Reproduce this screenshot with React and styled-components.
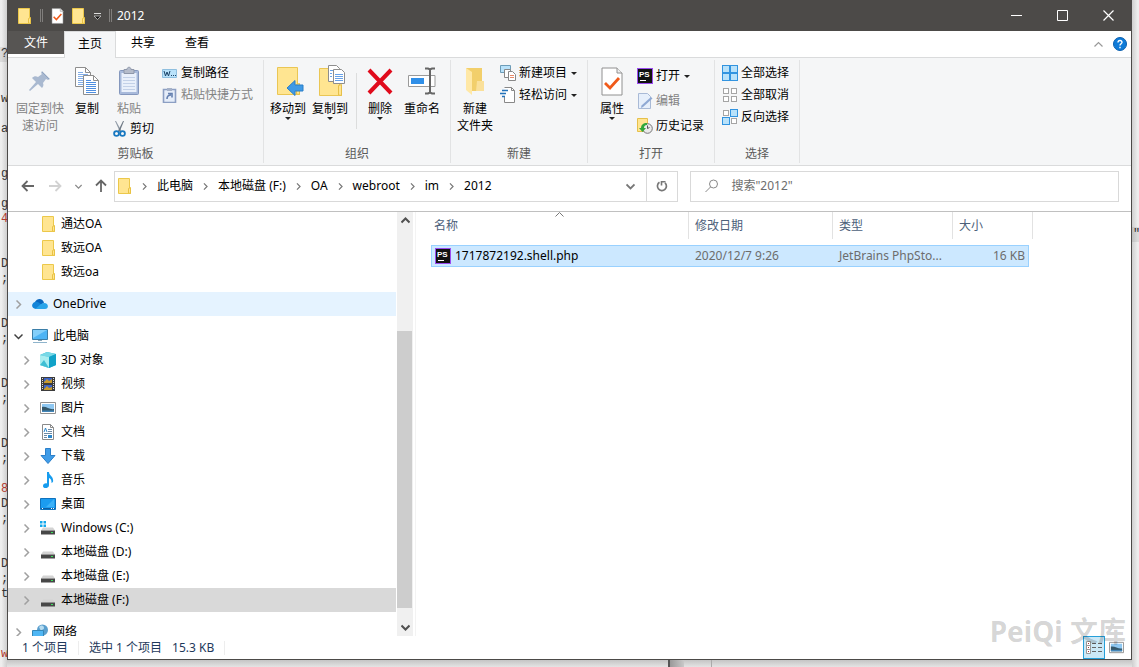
import React from 'react';
import styled, { createGlobalStyle, css } from 'styled-components';

const uiFont = `'Noto Sans', 'Noto Sans CJK SC', sans-serif`;
const lineGrey = '#dadbdc';

const GlobalStyle = createGlobalStyle`
  * {
    box-sizing: border-box;
  }
  body {
    margin: 0;
    overflow: hidden;
    font: 12px/16px ${uiFont};
    color: #000;
  }
  button,
  input {
    margin: 0;
    padding: 0;
    border: 0;
    background: none;
    color: inherit;
    font: inherit;
  }
  svg {
    display: block;
    flex: none;
  }
`;

/* ---------- desktop and window frame ---------- */

const Desktop = styled.div`
  display: grid;
  grid-template-columns: 7px minmax(0, 1fr) 7px;
  grid-template-rows: minmax(0, 1fr) 7px;
  height: 100vh;
  background: #e6e6e6;
`;

const EditorEdge = styled.div`
  grid-row: 1 / 3;
  grid-column: ${(props) => (props.$right ? 3 : 1)};
  padding-top: 2px;
  overflow: hidden;
  background: linear-gradient(
    to ${(props) => (props.$right ? 'left' : 'right')},
    #eee 20%,
    #cfcfcf
  );
  font: 12px/15px 'Liberation Mono', monospace;
`;

const EditorLine = styled.div`
  height: 15px;
  padding-left: 1px;
  color: ${(props) => (props.$red ? '#b03a2e' : '#333')};
  ${(props) =>
    props.$current &&
    css`
      background: rgba(0, 0, 0, 0.08);
    `}
`;

const BottomEdge = styled.div`
  display: flex;
  grid-row: 2;
  grid-column: 2;
  background: linear-gradient(#c4c4c4, #e4e4e4);
`;

const EdgeSpace = styled.div`
  flex: 661 1 0;
`;

const EdgeShadow = styled.div`
  width: 16px;
  border-left: 2px solid #555;
  background: linear-gradient(to right, #999, #c8c8c8);
`;

const EdgeRest = styled.div`
  width: 28px;
  border-right: 1px solid #aaa;
`;

const EdgeEnd = styled.div`
  flex: 420 1 0;
`;

const Window = styled.main`
  position: relative;
  display: flex;
  flex-direction: column;
  grid-row: 1;
  grid-column: 2;
  border: 1px solid #4c4a48;
  border-top: 0;
  background: #fff;
`;

const TitleBar = styled.header`
  display: flex;
  align-items: center;
  height: 31px;
  margin: 0 -1px;
  padding: 0 1px 0 11px;
  background: #4c4a48;
  color: #fff;
`;

const QuickAccess = styled.div`
  display: flex;
  align-items: center;
  gap: 8px;
  margin-right: 5px;
`;

const QuickButton = styled.button`
  display: flex;
`;

const TitleSeparator = styled.span`
  width: 3px;
  height: 13px;
  border: solid #807e7c;
  border-width: 0 1px;
`;

const Title = styled.h1`
  flex: 1;
  margin: 0;
  font-size: 12px;
  font-weight: 400;
`;

const CaptionButton = styled.button`
  display: grid;
  place-items: center;
  width: 46px;
  height: 31px;
`;

/* ---------- ribbon ---------- */

const Tabs = styled.nav`
  display: flex;
  height: 27px;
  border-bottom: 1px solid ${lineGrey};
`;

const Tab = styled.button`
  height: 26px;
  padding: 0 15px 2px;
  ${(props) =>
    props.$file &&
    css`
      height: 23px;
      padding: 0 16px;
      background: #575553;
      color: #fff;
    `}
  ${(props) =>
    props.$active &&
    css`
      height: 27px;
      padding: 0 13px 2px;
      border: 1px solid ${lineGrey};
      border-bottom: 0;
      background: #f5f6f7;
    `}
`;

const TabTools = styled.div`
  display: flex;
  align-items: center;
  gap: 10px;
  margin-left: auto;
  padding-right: 4px;
`;

const Ribbon = styled.section`
  display: flex;
  height: 108px;
  border-bottom: 1px solid ${lineGrey};
  background: #f5f6f7;
`;

const Group = styled.div`
  display: flex;
  flex-direction: column;
  width: ${(props) => props.$width}px;
  margin: 2px 0;
  border-right: 1px solid #e2e3e4;
`;

const GroupBody = styled.div`
  display: flex;
  flex: 1;
  padding-left: 3px;
`;

const GroupLabel = styled.div`
  height: 17px;
  color: #5a5a5a;
  text-align: center;
`;

const BigButton = styled.button`
  display: flex;
  flex-direction: column;
  align-items: center;
  align-self: flex-start;
  width: ${(props) => props.$width || 42}px;
  padding-top: 5px;
  line-height: 17px;
  white-space: pre-line;
  &:disabled {
    color: #838383;
  }
`;

const BigIcon = styled.span`
  display: grid;
  place-items: center;
  height: 32px;
  margin-bottom: 3px;
`;

const ButtonColumn = styled.div`
  display: flex;
  flex-direction: column;
  padding-top: ${(props) => (props.$loose ? 5 : 2)}px;
  padding-left: 4px;
  gap: ${(props) => (props.$loose ? 3 : 0)}px;
`;

const PasteColumn = styled.div`
  display: flex;
  flex-direction: column;
  gap: 1px;
  padding: 0 4px 0 3px;
  button + button {
    padding-left: 5px;
  }
`;

const SmallButton = styled.button`
  display: flex;
  align-items: center;
  gap: 3px;
  height: 22px;
  white-space: nowrap;
  &:disabled {
    color: #838383;
  }
`;

const MenuMark = styled.i`
  width: 0;
  border: solid transparent;
  border-width: 3px 3px 0;
  border-top-color: #222;
  ${(props) =>
    props.$side &&
    css`
      margin-left: 1px;
    `}
`;

const RibbonDivider = styled.i`
  width: 1px;
  height: 56px;
  margin: 13px 2px 0 5px;
  background: #dcdddd;
`;

/* ---------- address bar ---------- */

const AddressRow = styled.div`
  display: flex;
  align-items: center;
  height: 46px;
  padding: 0 12px 5px;
  border-bottom: 1px solid #c0c0c0;
`;

const NavButtons = styled.div`
  display: flex;
  align-items: center;
  width: 94px;
  gap: 11px;
`;

const NavButton = styled.button`
  display: grid;
  place-items: center;
  width: ${(props) => (props.$narrow ? 8 : 16)}px;
  height: 24px;
`;

const AddressBox = styled.div`
  display: flex;
  align-items: center;
  flex: 1;
  min-width: 0;
  height: 31px;
  margin-right: 12px;
  border: 1px solid #d9d9d9;
  padding-left: 3px;
`;

const Crumbs = styled.nav`
  display: flex;
  align-items: center;
  flex: 1;
  overflow: hidden;
  white-space: nowrap;
`;

const Crumb = styled.a`
  color: #000;
  text-decoration: none;
`;

const CrumbArrow = styled.span`
  display: grid;
  place-items: center;
  width: 25px;
  flex: none;
`;

const BoxButton = styled.button`
  display: grid;
  place-items: center;
  width: 31px;
  height: 29px;
  ${(props) =>
    props.$ruled &&
    css`
      border-left: 1px solid #d9d9d9;
    `}
`;

const SearchBox = styled.label`
  display: flex;
  align-items: center;
  width: 39%;
  gap: 12px;
  height: 31px;
  padding: 0 14px;
  border: 1px solid #d9d9d9;
`;

const SearchInput = styled.input`
  flex: 1;
  min-width: 0;
  outline: 0;
  &::placeholder {
    color: #6d6d6d;
    opacity: 1;
  }
`;

/* ---------- navigation tree ---------- */

const Content = styled.div`
  display: flex;
  flex: 1;
  min-height: 0;
`;

const Tree = styled.nav`
  width: 388px;
  margin-right: 1px;
  overflow: hidden;
`;

const TreeSection = styled.div`
  margin-bottom: 8px;
`;

const TreeRow = styled.a`
  display: flex;
  align-items: center;
  height: 24px;
  padding-left: ${(props) => (props.$nested ? 14 : 6)}px;
  gap: 5px;
  background: ${(props) => props.$fill || 'transparent'};
  color: #000;
  text-decoration: none;
`;

const TreeToggle = styled.span`
  display: grid;
  place-items: center;
  width: 9px;
  margin-right: 4px;
`;

const ScrollBar = styled.div`
  display: flex;
  flex-direction: column;
  width: 16px;
  background: #f0f0f0;
`;

const ScrollButton = styled.button`
  display: grid;
  place-items: center;
  height: 17px;
`;

const ScrollTrack = styled.div`
  display: flex;
  flex: 1;
  flex-direction: column;
  justify-content: flex-end;
  padding: 0 1px 11px 0;
`;

const ScrollThumb = styled.div`
  height: 73%;
  background: #cdcdcd;
`;

/* ---------- file list ---------- */

const FilePane = styled.section`
  flex: 1;
  min-width: 0;
  margin-left: 2px;
  padding-left: 15px;
  border-left: 1px solid #f3f3f3;
  overflow: hidden;
`;

const FileTable = styled.table`
  display: block;
`;

const TableHead = styled.thead`
  display: block;
  margin-bottom: 6px;
`;

const TableBody = styled.tbody`
  display: block;
`;

const HeadRow = styled.tr`
  display: grid;
  grid-template-columns: 258px 144px 120px 80px;
  height: 27px;
`;

const HeadCell = styled.th`
  position: relative;
  padding: 6px 0 0 ${(props) => (props.$first ? 3 : 6)}px;
  border-right: 1px solid #e2e2e2;
  color: #4c607a;
  font-weight: 400;
  text-align: left;
`;

const SortMark = styled.span`
  position: absolute;
  top: -2px;
  left: 50%;
  margin-left: -5px;
`;

const FileRow = styled.tr`
  display: grid;
  grid-template-columns: 257px 144px 120px 75px;
  width: 598px;
  height: 22px;
  border: 1px solid #99d1ff;
  background: #cce8ff;
`;

const FileCell = styled.td`
  padding: 2px 3px 0 6px;
  color: #6d6d6d;
  white-space: nowrap;
  overflow: hidden;
  text-overflow: ellipsis;
  ${(props) =>
    props.$size &&
    css`
      text-align: right;
    `}
`;

const NameCell = styled.td`
  display: flex;
  align-items: center;
  gap: 4px;
  padding: 0 3px;
`;

/* ---------- status bar ---------- */

const StatusBar = styled.footer`
  display: flex;
  align-items: center;
  height: 23px;
  padding-left: 14px;
  color: #1e395b;
`;

const StatusItem = styled.span`
  margin-right: 10px;
`;

const StatusRule = styled.i`
  width: 1px;
  height: 14px;
  margin-right: 10px;
  background: #ededed;
`;

const ViewButtons = styled.div`
  display: flex;
  height: 23px;
  margin-left: auto;
  padding-right: 4px;
`;

const ViewButton = styled.button`
  display: grid;
  place-items: center;
  width: 22px;
  height: 23px;
  ${(props) =>
    props.$active &&
    css`
      border: 1px solid #26a0da;
      background: #cbe8f6;
    `}
`;

const Watermark = styled.div`
  position: absolute;
  right: 5px;
  bottom: 11px;
  color: rgba(0, 0, 0, 0.18);
  font: 700 28px/34px ${uiFont};
  white-space: nowrap;
  pointer-events: none;
`;

/* ---------- icons ---------- */

const Svg = ({ w = 16, h = 16, children }) => (
  <svg width={w} height={h} viewBox={`0 0 ${w} ${h}`} fill="none" aria-hidden="true">
    {children}
  </svg>
);

const Chevron = ({ dir = 'right', color = '#8a8a8a', size = 9, weight = 1.5 }) => {
  const paths = {
    right: 'M2.5 0.5 6.5 4.5 2.5 8.5',
    down: 'M0.5 2.5 4.5 6.5 8.5 2.5',
    up: 'M0.5 6.5 4.5 2.5 8.5 6.5',
  };
  return (
    <svg width={size} height={size} viewBox="0 0 9 9" fill="none" aria-hidden="true">
      <path d={paths[dir]} stroke={color} strokeWidth={weight} />
    </svg>
  );
};

const FolderIcon = ({ w = 14 }) => (
  <Svg w={w}>
    <g transform={`translate(${w - 14} 0)`}>
      <path d="M.5.5h11v10h1v5H.5z" fill="#ffe591" stroke="#ecc84a" />
      <path d="M10.5 15v-4.5l2-1v6z" fill="#ffe591" stroke="#e9c243" />
    </g>
  </Svg>
);

const CheckSheetIcon = ({ w = 13, h = 16 }) => (
  <svg width={w} height={h} viewBox="0 0 22 29" fill="none" aria-hidden="true">
    <path d="M1 1h15l5 5v22H1z" fill="#fff" stroke="#909090" />
    <path d="M16 1v5h5" stroke="#909090" fill="#eee" />
    <path d="m4 16 5 5 9-10" stroke="#f05a1a" strokeWidth="2.8" />
  </svg>
);

const QuickMenuIcon = () => (
  <Svg w={7} h={8}>
    <path d="M0 1.5h7" stroke="#ddd" />
    <path d="M0 4h7L3.5 7.500z" fill="#111" stroke="#ddd" strokeWidth=".7" />
  </Svg>
);

const PinIcon = () => (
  <Svg w={24} h={24}>
    <path
      d="M14 2l8 8-2 1-2-1-3 4c1 2 0 4-1 5l-4-4-8 7-1-1 7-8-4-4c2-2 4-2 6-1l4-3-1-1z"
      fill="#a9b9d0"
    />
    <path d="M14 3l7 7" stroke="#8fa3c0" />
  </Svg>
);

const Sheet = ({ x, y, line = '#4f8fe0' }) => (
  <g transform={`translate(${x} ${y})`}>
    <path d="M.5.5h10l5 5v14H.5z" fill="#fff" stroke="#8e8e8e" />
    <path d="M10.5.5v5h5" stroke="#8e8e8e" />
    <path
      d="M3 5.500h5M3 7.500h10M3 9.500h10M3 11.500h10M3 13.500h10M3 15.500h10M3 17.500h10"
      stroke={line}
    />
  </g>
);

const CopyIcon = () => (
  <Svg w={26} h={30}>
    <Sheet x={1} y={1} line="#82aee8" />
    <Sheet x={9} y={9} />
  </Svg>
);

const PasteIcon = () => (
  <Svg w={22} h={30}>
    <rect x="1.5" y="4.5" width="19" height="24" rx="1" fill="#a8badb" stroke="#8497bd" />
    <path d="M3.5 7h15v19h-15z" fill="#e9f0fb" />
    <path d="M5 11.500h12M5 14.500h12M5 17.500h12M5 20.500h12M5 23.500h12" stroke="#c3d1e8" />
    <path d="M6 3.500h3c0-3 4-3 4 0h3v4H6z" fill="#b5bccb" stroke="#8e97aa" />
  </Svg>
);

const CutIcon = () => (
  <Svg w={14}>
    <path d="M2 0h1l5.500 10-1.500 1z" fill="#8f9aa6" />
    <path d="M11 0h-1L5 10l1.500 1z" fill="#6d7884" />
    <circle cx="3.5" cy="12.5" r="2.400" stroke="#1878c0" strokeWidth="1.800" />
    <circle cx="9.5" cy="12.5" r="2.400" stroke="#1878c0" strokeWidth="1.800" />
  </Svg>
);

const PathIcon = () => (
  <Svg>
    <path d="M.5 4.500h14v8H.5z" fill="#b9e2fa" stroke="#8fbfdf" />
    <path d="M2 6l1.500 5L5 7l1.500 4L8 6" stroke="#1d4468" />
    <path d="M9 10.500h1M11 10.500h1M13 10.500h1" stroke="#1d4468" />
  </Svg>
);

const ShortcutIcon = () => (
  <Svg>
    <path d="M1.500 2.500h12v13h-12z" fill="#e5edf9" stroke="#8c9fc3" strokeWidth="1.600" />
    <path d="M5 1h5v3H5z" fill="#a5b1c8" />
    <path d="M5 12c0-3 1-4 4-4M6 6.500h4v4" stroke="#6580b0" strokeWidth="1.600" />
  </Svg>
);

const BigFolder = () => (
  <g>
    <path d="M1.500 1.500h20v24h2v3h-22z" fill="#ffe591" stroke="#eac654" />
    <path d="M20.500 28V18.500l3-1v11z" fill="#ffe591" stroke="#e6c04a" />
  </g>
);

const MoveToIcon = () => (
  <Svg w={32} h={30}>
    <g transform="translate(4 0)">
      <BigFolder />
      <path d="M11 22l8-7.500v4.500h8v6h-8v4.500z" fill="#3f9ae6" stroke="#2a7fc8" />
    </g>
  </Svg>
);

const CopyToIcon = () => (
  <Svg w={32} h={32}>
    <g transform="translate(4 2)">
      <BigFolder />
    </g>
    <g transform="translate(4 0)">
      <path d="M10.500.5h8l3 3v13h-11z" fill="#fff" stroke="#8e8e8e" />
      <path d="M15.500 4.500h8l3 3v11h-11z" fill="#fff" stroke="#8e8e8e" />
      <path
        d="M12 5.500h3M12 8.500h2M12 11.500h2M17 9.500h8M17 11.500h8M17 13.500h8M17 15.500h8"
        stroke="#68a2e8"
      />
    </g>
  </Svg>
);

const DeleteIcon = () => (
  <Svg w={26} h={28}>
    <path d="M2 3l22 23M24 3L2 26" stroke="#e00b1c" strokeWidth="4" />
  </Svg>
);

const RenameIcon = () => (
  <Svg w={28} h={28}>
    <path d="M.5 8.500h26.500v11H.5z" fill="#fff" stroke="#9a9a9a" />
    <path d="M3 11h13v6H3z" fill="#2f8fe8" />
    <path
      d="M17 1.500h3l2 1 2-1h3M22 2v24M17 26.500h3l2-1 2 1h3"
      stroke="#666"
      strokeWidth="2"
    />
  </Svg>
);

const NewFolderIcon = () => (
  <Svg w={20} h={28}>
    <path d="M1 1h16v23H7z" fill="#f2cf6b" />
    <path d="M12 14h7v10h-8z" fill="#fae09a" />
    <path d="M1 1l6 4v23l-6-5z" fill="#ffe8a6" />
  </Svg>
);

const NewItemIcon = () => (
  <Svg>
    <path d="M.5.5h10v7H.5z" fill="#b9e2fa" stroke="#6c9cb8" />
    <path d="M4.500 4.500h6v8h-6z" fill="#fff" stroke="#888" />
    <path d="M8.500 6.500h4l3 3v6h-7z" fill="#fff" stroke="#888" />
    <path d="M10 10.500h4M10 12.500h4" stroke="#e88a6a" />
  </Svg>
);

const EasyAccessIcon = () => (
  <Svg>
    <path d="M4.500.5h7l3 3v12h-10V9" fill="#fff" stroke="#888" />
    <path d="M11.500.5v3h3" stroke="#888" />
    <path d="M2 3.500h6M0 6.500h6M2 9.500h3" stroke="#2473ba" strokeWidth="1.500" />
  </Svg>
);

const PhpStormIcon = () => (
  <Svg>
    <rect x=".5" y=".5" width="15" height="15" fill="#111" stroke="#9a4cf0" />
    <text
      x="2"
      y="9"
      fill="#fff"
      fontFamily="Liberation Sans, sans-serif"
      fontSize="8"
      fontWeight="700"
    >
      PS
    </text>
    <path d="M3 12.500h6" stroke="#fff" />
  </Svg>
);

const EditIcon = () => (
  <Svg>
    <path d="M1.500.5h9l3 3v12h-12z" fill="#e6effb" stroke="#a9bad6" />
    <path d="M14 4l1.500 1.500L6 14l-2 1 .5-2.500z" fill="#8fa9d4" />
  </Svg>
);

const HistoryIcon = () => (
  <Svg>
    <path d="M.5.5h10v13H.5z" fill="#ffe591" stroke="#e6c04a" />
    <circle cx="10.5" cy="10.5" r="4.800" fill="#eaeaea" stroke="#777" />
    <path d="M10.500 7.500v3l2-1" stroke="#555" />
    <path d="M10 5C6 5 4 7 4 10H2l3.500 4L9 10H7c0-2 1-3 3-3z" fill="#2fa83a" />
  </Svg>
);

const selectCells = [
  [0, 0],
  [8, 0],
  [0, 8],
  [8, 8],
];

const SelectIcon = ({ on }) => (
  <Svg>
    {selectCells.map(([x, y], i) =>
      on[i] ? (
        <rect key={i} x={x + 0.5} y={y + 0.5} width="7" height="7" fill="#b9e2fa" stroke="#3294e0" />
      ) : (
        <rect key={i} x={x + 1.5} y={y + 1.5} width="5" height="5" fill="#fff" stroke="#a5a5a5" />
      )
    )}
  </Svg>
);

const ArrowIcon = ({ dir, color = '#666' }) => {
  const turn = { left: 0, up: 90, right: 180 }[dir];
  return (
    <Svg w={14} h={14}>
      <g transform={`rotate(${turn} 7 7)`} stroke={color} strokeWidth="1.800">
        <path d="M1.500 7H13M6.500 2l-5 5 5 5" />
      </g>
    </Svg>
  );
};

const RefreshIcon = () => (
  <Svg w={14} h={14}>
    <path d="M4.500 3.300A4.500 4.500 0 1 0 10 3.800" stroke="#777" strokeWidth="1.700" />
    <path d="M6.500 6.500V2.800h4" stroke="#777" strokeWidth="1.600" />
  </Svg>
);

const SearchIcon = () => (
  <Svg w={14} h={14}>
    <circle cx="8.5" cy="5" r="4" stroke="#888" />
    <path d="M5.500 8l-5 5" stroke="#888" />
  </Svg>
);

const OneDriveIcon = () => (
  <Svg>
    <path d="M3 6c2-4 8-4 9 1l-6 3z" fill="#0a66bd" />
    <path d="M3 6c2-1 4 0 9 5l-8 2C-1 13-1 7 3 6z" fill="#1384d8" />
    <path d="M3 13c3-2 6-6 9-6 5 0 5 6 1 6z" fill="#2aa5ea" />
  </Svg>
);

const ComputerIcon = () => (
  <Svg>
    <path d="M.5 1.500h15v10H.5z" fill="#4db4f5" stroke="#3b7ea8" />
    <path d="M1 2h14L1 10z" fill="#83cffa" />
    <path d="M6 12h4v1H6z" fill="#8ba7b8" />
    <path d="M1 14.500h14" stroke="#8fb4cc" />
  </Svg>
);

const CubeIcon = () => (
  <Svg>
    <path d="M0 3l7-3 9 2v11l-7 3-9-3z" fill="#24b5d4" />
    <path d="M0 3l7-3 9 2-7 3z" fill="#77d8e6" />
    <path d="M0 3l9 2v11l-9-3z" fill="#a9edf0" />
    <path d="M0 13l4-5 5 8z" fill="#3fbfd4" />
    <path d="M9 5l7-3v11l-7 3z" fill="#11a2c8" />
  </Svg>
);

const VideoIcon = () => (
  <Svg>
    <path d="M1 1h14v14H1z" fill="#3c3c3c" />
    <path d="M2.500 2v12M13.500 2v12" stroke="#ddd" strokeDasharray="1 1" />
    <path d="M4 2h8v5H4zM4 9h8v5H4z" fill="#3a63c8" />
    <path d="M4 6l3-3 2 2 3-2v4H4zM4 13l3-3 2 2 3-1v3H4z" fill="#c89b2e" />
  </Svg>
);

const PictureIcon = ({ w = 16 }) => (
  <svg width={w} height={w} viewBox="0 0 16 16" fill="none" aria-hidden="true">
    <path d="M.5 2.500h15v11H.5z" fill="#fff" stroke="#929292" />
    <path d="M2 4h12v8H2z" fill="#8fc8f2" />
    <path d="M2 7c4-1 8 3 12 2v3H2z" fill="#35586a" />
    <path d="M2 10.500h12V12H2z" fill="#4386b9" />
  </svg>
);

const DocIcon = () => (
  <Svg>
    <path d="M2.500.5h8l3 3v12h-11z" fill="#fff" stroke="#8a8a8a" />
    <path d="M10.500.5v3h3" stroke="#8a8a8a" />
    <path d="M8 5.500h4M8 7.500h4M4 9.500h8M4 11.500h3M4 13.500h3" stroke="#6d8aa5" />
    <path d="M4 8l1.500-4L7 8" stroke="#2d86c9" />
    <path d="M8 11h4v3H8z" fill="#2d86c9" />
  </Svg>
);

const DownloadIcon = () => (
  <Svg>
    <path d="M5.500.5h5v7h4.500L8 15.500 1 7.500h4.500z" fill="#3f9ce8" stroke="#2b7fc9" />
  </Svg>
);

const MusicIcon = () => (
  <Svg>
    <path
      d="M7 0h2c0 4 5 4 4 10l-1.500 1c0-3-.5-4-2.500-5v7c0 4-6 4-6 1 0-2 2-3 4-2.500z"
      fill="#179cee"
    />
  </Svg>
);

const DesktopIcon = () => (
  <Svg>
    <path d="M.5 2.500h15v11H.5z" fill="#1b9cf0" stroke="#0f72bd" />
    <path d="M14 3v8H6z" fill="#3db2f8" />
    <path d="M1 12.500h14" stroke="#0d5fa4" />
    <path d="M2 12.500h1M11 12.500h1M13 12.500h1" stroke="#fff" />
  </Svg>
);

const DriveIcon = ({ system }) => (
  <Svg>
    {system && (
      <path
        d="M0 1h2.500v2.500H0zM3.500 1H6v2.500H3.500zM0 4.500h2.500V7H0zM3.500 4.500H6V7H3.500z"
        fill="#12a8ec"
      />
    )}
    <path d="M3 7.500h10l2 3H1z" fill="#d3d3d3" />
    <path d="M1 10.500h14v4H1z" fill="#474747" />
    <path d="M11 12.500h2" stroke="#3be05a" />
  </Svg>
);

const NetworkIcon = () => (
  <Svg>
    <circle cx="10.5" cy="6" r="5.500" fill="#5a9fce" />
    <path d="M7 3c3-3 5-1 5 1s-2 1-3 3z" fill="#b7dcf0" />
    <path d="M.5 6.500h11v7H.5z" fill="#4fb6f4" stroke="#3487b8" />
    <path d="M3 15.500h7" stroke="#7ca8c2" />
  </Svg>
);

const DetailsIcon = () => (
  <Svg w={18} h={14}>
    <path d="M1.500.5h4v12h-4zM1.500 4.500h4M1.500 8.500h4" fill="#fff" stroke="#999" />
    <path d="M3 2.500h1M3 6.500h1M3 10.500h1" stroke="#a33" />
    <path
      d="M7 2.500h4M13 2.500h4M7 6.500h4M13 6.500h4M7 10.500h4M13 10.500h4"
      stroke="#666"
    />
  </Svg>
);

const HelpIcon = () => (
  <Svg w={14} h={14}>
    <circle cx="7" cy="7" r="6.500" fill="#0f7bd8" stroke="#0a5fae" />
    <path
      d="M5 5.500c0-3 4.200-2.500 4 0-.1 1.200-2 1.500-2 3M7 9.800v1.400"
      stroke="#fff"
      strokeWidth="1.400"
    />
  </Svg>
);

/* ---------- data ---------- */

const editorLines = {
  3: '?',
  6: 'w',
  8: 'a',
  11: 'g',
  13: 'g',
  14: '4',
  17: 'D',
  18: ';',
  21: 'D',
  22: ';',
  25: 'D',
  26: ';',
  29: 'D',
  30: ';',
  32: '8',
  33: 'D',
  34: ';',
  37: 'D',
  38: ';',
  39: 't',
  43: 'w',
};
const redLines = [14, 32, 43];

const crumbs = ['此电脑', '本地磁盘 (F:)', 'OA', 'webroot', 'im', '2012'];

const quickFolders = ['通达OA', '致远OA', '致远oa'];

const places = [
  { name: '3D 对象', icon: <CubeIcon /> },
  { name: '视频', icon: <VideoIcon /> },
  { name: '图片', icon: <PictureIcon /> },
  { name: '文档', icon: <DocIcon /> },
  { name: '下载', icon: <DownloadIcon /> },
  { name: '音乐', icon: <MusicIcon /> },
  { name: '桌面', icon: <DesktopIcon /> },
  { name: 'Windows (C:)', icon: <DriveIcon system /> },
  { name: '本地磁盘 (D:)', icon: <DriveIcon /> },
  { name: '本地磁盘 (E:)', icon: <DriveIcon /> },
  { name: '本地磁盘 (F:)', icon: <DriveIcon />, fill: '#d9d9d9' },
];

/* ---------- parts ---------- */

const Big = ({ icon, label, menu, width, ...rest }) => (
  <BigButton $width={width} {...rest}>
    <BigIcon>{icon}</BigIcon>
    {label}
    {menu && <MenuMark />}
  </BigButton>
);

const Small = ({ icon, label, menu, ...rest }) => (
  <SmallButton {...rest}>
    {icon}
    {label}
    {menu && <MenuMark $side />}
  </SmallButton>
);

const TreeItem = ({ name, icon, nested, open, leaf, fill }) => (
  <TreeRow href="#" $nested={nested} $fill={fill}>
    <TreeToggle>
      {!leaf && (
        <Chevron dir={open ? 'down' : 'right'} color={open ? '#404040' : '#a0a0a0'} />
      )}
    </TreeToggle>
    {icon}
    {name}
  </TreeRow>
);

const TitleArea = () => (
  <TitleBar>
    <QuickAccess>
      <FolderIcon />
      <TitleSeparator />
      <QuickButton aria-label="属性">
        <CheckSheetIcon />
      </QuickButton>
      <QuickButton aria-label="新建文件夹">
        <FolderIcon />
      </QuickButton>
      <QuickButton aria-label="自定义快速访问工具栏">
        <QuickMenuIcon />
      </QuickButton>
      <TitleSeparator />
    </QuickAccess>
    <Title>2012</Title>
    <CaptionButton aria-label="最小化">
      <Svg w={11} h={11}>
        <path d="M0 5.500h11" stroke="#fff" />
      </Svg>
    </CaptionButton>
    <CaptionButton aria-label="最大化">
      <Svg w={11} h={11}>
        <path d="M.5.5h10v10H.5z" stroke="#fff" />
      </Svg>
    </CaptionButton>
    <CaptionButton aria-label="关闭">
      <Svg w={11} h={11}>
        <path d="M.5.5l10 10M10.500.5l-10 10" stroke="#fff" strokeWidth="1.200" />
      </Svg>
    </CaptionButton>
  </TitleBar>
);

const RibbonArea = () => (
  <Ribbon>
    <Group $width={256}>
      <GroupBody>
        <Big width={58} icon={<PinIcon />} label={'固定到快\n速访问'} disabled />
        <Big width={36} icon={<CopyIcon />} label="复制" />
        <PasteColumn>
          <Big icon={<PasteIcon />} label="粘贴" disabled />
          <Small icon={<CutIcon />} label="剪切" />
        </PasteColumn>
        <ButtonColumn>
          <Small icon={<PathIcon />} label="复制路径" />
          <Small icon={<ShortcutIcon />} label="粘贴快捷方式" disabled />
        </ButtonColumn>
      </GroupBody>
      <GroupLabel>剪贴板</GroupLabel>
    </Group>
    <Group $width={187}>
      <GroupBody>
        <Big icon={<MoveToIcon />} label="移动到" menu />
        <Big icon={<CopyToIcon />} label="复制到" menu />
        <RibbonDivider />
        <Big icon={<DeleteIcon />} label="删除" menu />
        <Big icon={<RenameIcon />} label="重命名" />
      </GroupBody>
      <GroupLabel>组织</GroupLabel>
    </Group>
    <Group $width={137}>
      <GroupBody>
        <Big icon={<NewFolderIcon />} label={'新建\n文件夹'} />
        <ButtonColumn>
          <Small icon={<NewItemIcon />} label="新建项目" menu />
          <Small icon={<EasyAccessIcon />} label="轻松访问" menu />
        </ButtonColumn>
      </GroupBody>
      <GroupLabel>新建</GroupLabel>
    </Group>
    <Group $width={127}>
      <GroupBody>
        <Big icon={<CheckSheetIcon w={22} h={29} />} label="属性" menu />
        <ButtonColumn $loose>
          <Small icon={<PhpStormIcon />} label="打开" menu />
          <Small icon={<EditIcon />} label="编辑" disabled />
          <Small icon={<HistoryIcon />} label="历史记录" />
        </ButtonColumn>
      </GroupBody>
      <GroupLabel>打开</GroupLabel>
    </Group>
    <Group $width={85}>
      <GroupBody>
        <ButtonColumn>
          <Small icon={<SelectIcon on={[1, 1, 1, 1]} />} label="全部选择" />
          <Small icon={<SelectIcon on={[0, 0, 0, 0]} />} label="全部取消" />
          <Small icon={<SelectIcon on={[0, 1, 1, 0]} />} label="反向选择" />
        </ButtonColumn>
      </GroupBody>
      <GroupLabel>选择</GroupLabel>
    </Group>
  </Ribbon>
);

const AddressArea = () => (
  <AddressRow>
    <NavButtons>
      <NavButton aria-label="后退">
        <ArrowIcon dir="left" />
      </NavButton>
      <NavButton aria-label="前进">
        <ArrowIcon dir="right" color="#d2d2d2" />
      </NavButton>
      <NavButton $narrow aria-label="最近浏览的位置">
        <Chevron dir="down" size={7} />
      </NavButton>
      <NavButton aria-label="上移">
        <ArrowIcon dir="up" />
      </NavButton>
    </NavButtons>
    <AddressBox>
      <FolderIcon />
      <Crumbs aria-label="地址">
        {crumbs.map((name) => (
          <React.Fragment key={name}>
            <CrumbArrow>
              <Chevron size={7} color="#777" />
            </CrumbArrow>
            <Crumb href="#">{name}</Crumb>
          </React.Fragment>
        ))}
      </Crumbs>
      <BoxButton aria-label="以前的位置">
        <Chevron dir="down" color="#777" weight={1.8} />
      </BoxButton>
      <BoxButton $ruled aria-label="刷新">
        <RefreshIcon />
      </BoxButton>
    </AddressBox>
    <SearchBox>
      <SearchIcon />
      <SearchInput type="text" aria-label="搜索" placeholder={'搜索"2012"'} />
    </SearchBox>
  </AddressRow>
);

const TreeArea = () => (
  <>
    <Tree>
      <TreeSection>
        {quickFolders.map((name) => (
          <TreeItem key={name} name={name} icon={<FolderIcon w={16} />} nested leaf />
        ))}
      </TreeSection>
      <TreeSection>
        <TreeItem name="OneDrive" icon={<OneDriveIcon />} fill="#e5f3ff" />
      </TreeSection>
      <TreeSection>
        <TreeItem name="此电脑" icon={<ComputerIcon />} open />
        {places.map((place) => (
          <TreeItem key={place.name} {...place} nested />
        ))}
      </TreeSection>
      <TreeItem name="网络" icon={<NetworkIcon />} />
    </Tree>
    <ScrollBar>
      <ScrollButton aria-label="向上滚动">
        <Chevron dir="up" color="#505050" weight={2} />
      </ScrollButton>
      <ScrollTrack>
        <ScrollThumb />
      </ScrollTrack>
      <ScrollButton aria-label="向下滚动">
        <Chevron dir="down" color="#505050" weight={2} />
      </ScrollButton>
    </ScrollBar>
  </>
);

const FileArea = () => (
  <FilePane>
    <FileTable>
      <TableHead>
        <HeadRow>
          <HeadCell $first>
            名称
            <SortMark>
              <Chevron dir="up" color="#777" weight={1} />
            </SortMark>
          </HeadCell>
          <HeadCell>修改日期</HeadCell>
          <HeadCell>类型</HeadCell>
          <HeadCell>大小</HeadCell>
        </HeadRow>
      </TableHead>
      <TableBody>
        <FileRow>
          <NameCell>
            <PhpStormIcon />
            1717872192.shell.php
          </NameCell>
          <FileCell>2020/12/7 9:26</FileCell>
          <FileCell>JetBrains PhpSto...</FileCell>
          <FileCell $size>16 KB</FileCell>
        </FileRow>
      </TableBody>
    </FileTable>
  </FilePane>
);

const App = () => (
  <Desktop>
    <GlobalStyle />
    <EditorEdge>
      {Array.from({ length: 45 }, (_, i) => (
        <EditorLine key={i} $red={redLines.includes(i)} $current={i === 3}>
          {editorLines[i]}
        </EditorLine>
      ))}
    </EditorEdge>
    <Window>
      <TitleArea />
      <Tabs>
        <Tab $file>文件</Tab>
        <Tab $active>主页</Tab>
        <Tab>共享</Tab>
        <Tab>查看</Tab>
        <TabTools>
          <QuickButton aria-label="折叠功能区">
            <Chevron dir="up" color="#999" weight={1.2} />
          </QuickButton>
          <QuickButton aria-label="帮助">
            <HelpIcon />
          </QuickButton>
        </TabTools>
      </Tabs>
      <RibbonArea />
      <AddressArea />
      <Content>
        <TreeArea />
        <FileArea />
      </Content>
      <StatusBar>
        <StatusItem>1 个项目</StatusItem>
        <StatusRule />
        <StatusItem>选中 1 个项目</StatusItem>
        <StatusItem>15.3 KB</StatusItem>
        <StatusRule />
        <ViewButtons>
          <ViewButton $active aria-label="详细信息">
            <DetailsIcon />
          </ViewButton>
          <ViewButton aria-label="大缩略图">
            <PictureIcon w={15} />
          </ViewButton>
        </ViewButtons>
      </StatusBar>
      <Watermark>PeiQi 文库</Watermark>
    </Window>
    <EditorEdge $right>
      {Array.from({ length: 45 }, (_, i) => (
        <EditorLine key={i} $current={i === 15}>
          {i === 15 ? '"' : ''}
        </EditorLine>
      ))}
    </EditorEdge>
    <BottomEdge>
      <EdgeSpace />
      <EdgeShadow />
      <EdgeRest />
      <EdgeEnd />
    </BottomEdge>
  </Desktop>
);

export default App;
